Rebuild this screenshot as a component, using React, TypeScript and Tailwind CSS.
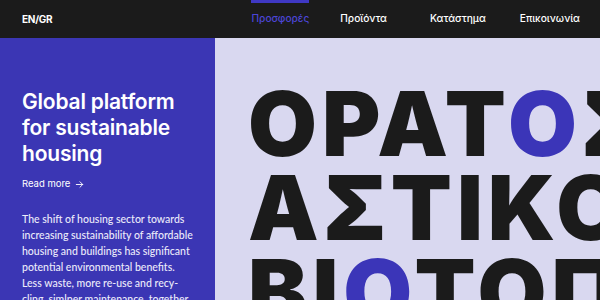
const nav = ["Προσφορές", "Προϊόντα", "Κατάστημα", "Επικοινωνία"];
const gaps = ["ml-0", "ml-[31px]", "ml-[43px]", "ml-[34px]"];

const body = [
  "The shift of housing sector towards",
  "increasing sustainability of affordable",
  "housing and buildings has significant",
  "potential environmental benefits.",
  "Less waste, more re-use and recy-",
  "cling, simlper maintenance, together",
];

function Header() {
  return (
    <header className="flex h-[38px] items-center bg-[#1b1b1b] pl-[22px] pr-5">
      <span className="text-[10px] font-bold tracking-tight text-white">EN/GR</span>
      <nav className="ml-auto flex h-full items-center">
        {nav.map((item, i) => (
          <a
            key={item}
            className={
              "relative flex h-full items-center text-[10.2px] font-medium " +
              gaps[i] +
              (i === 0 ? " text-[#4b45d6]" : " text-white")
            }
          >
            {i === 0 && <span className="absolute left-[-1px] right-0 top-0 h-[3px] bg-[#3f38c4]" />}
            {item}
          </a>
        ))}
      </nav>
    </header>
  );
}

function Word({ parts }: { parts: [string, boolean][] }) {
  return (
    <div className="whitespace-nowrap">
      {parts.map(([t, blue], i) => (
        <span key={i} className={blue ? "text-[#3b35b8]" : "text-[#1b1b1b]"}>
          {t}
        </span>
      ))}
    </div>
  );
}

export default function App() {
  return (
    <div className="h-[300px] w-[600px] overflow-hidden font-['Inter',sans-serif]">
      <Header />
      <div className="flex h-[262px]">
        <section className="w-[215px] shrink-0 bg-[#3b36b4] pl-[22px] pr-[26px] pt-[51px] text-white">
          <h1 className="text-[21px] font-semibold leading-[26px] tracking-[-0.2px]">
            Global platform for sustainable housing
          </h1>
          <a className="mt-[10px] flex items-center gap-1 text-[9.5px]">
            Read more
            <svg width="11" height="11" viewBox="0 0 24 24" fill="none" stroke="currentColor" strokeWidth="2" strokeLinecap="round" strokeLinejoin="round">
              <path d="M5 12h14M13 6l6 6-6 6" />
            </svg>
          </a>
          <div className="mt-[20px] font-['Lato',sans-serif] text-[10.5px] font-medium leading-[16px] text-[#ecebfa]">
            {body.map((l) => (
              <p key={l} className="whitespace-nowrap">
                {l}
              </p>
            ))}
          </div>
        </section>
        <section className="flex-1 overflow-hidden bg-[#d9d8f0] pl-[33px] pt-[44px]">
          <div className="text-[89px] font-black leading-[84px] tracking-[5px]">
            <Word parts={[["ΟΡΑΤ", false], ["Ο", true], ["Σ", false]]} />
            <Word parts={[["ΑΣΤΙΚΟΣ", false]]} />
            <Word parts={[["ΒΙ", false], ["Ο", true], ["ΤΟΠΟΣ", false]]} />
          </div>
        </section>
      </div>
    </div>
  );
}
